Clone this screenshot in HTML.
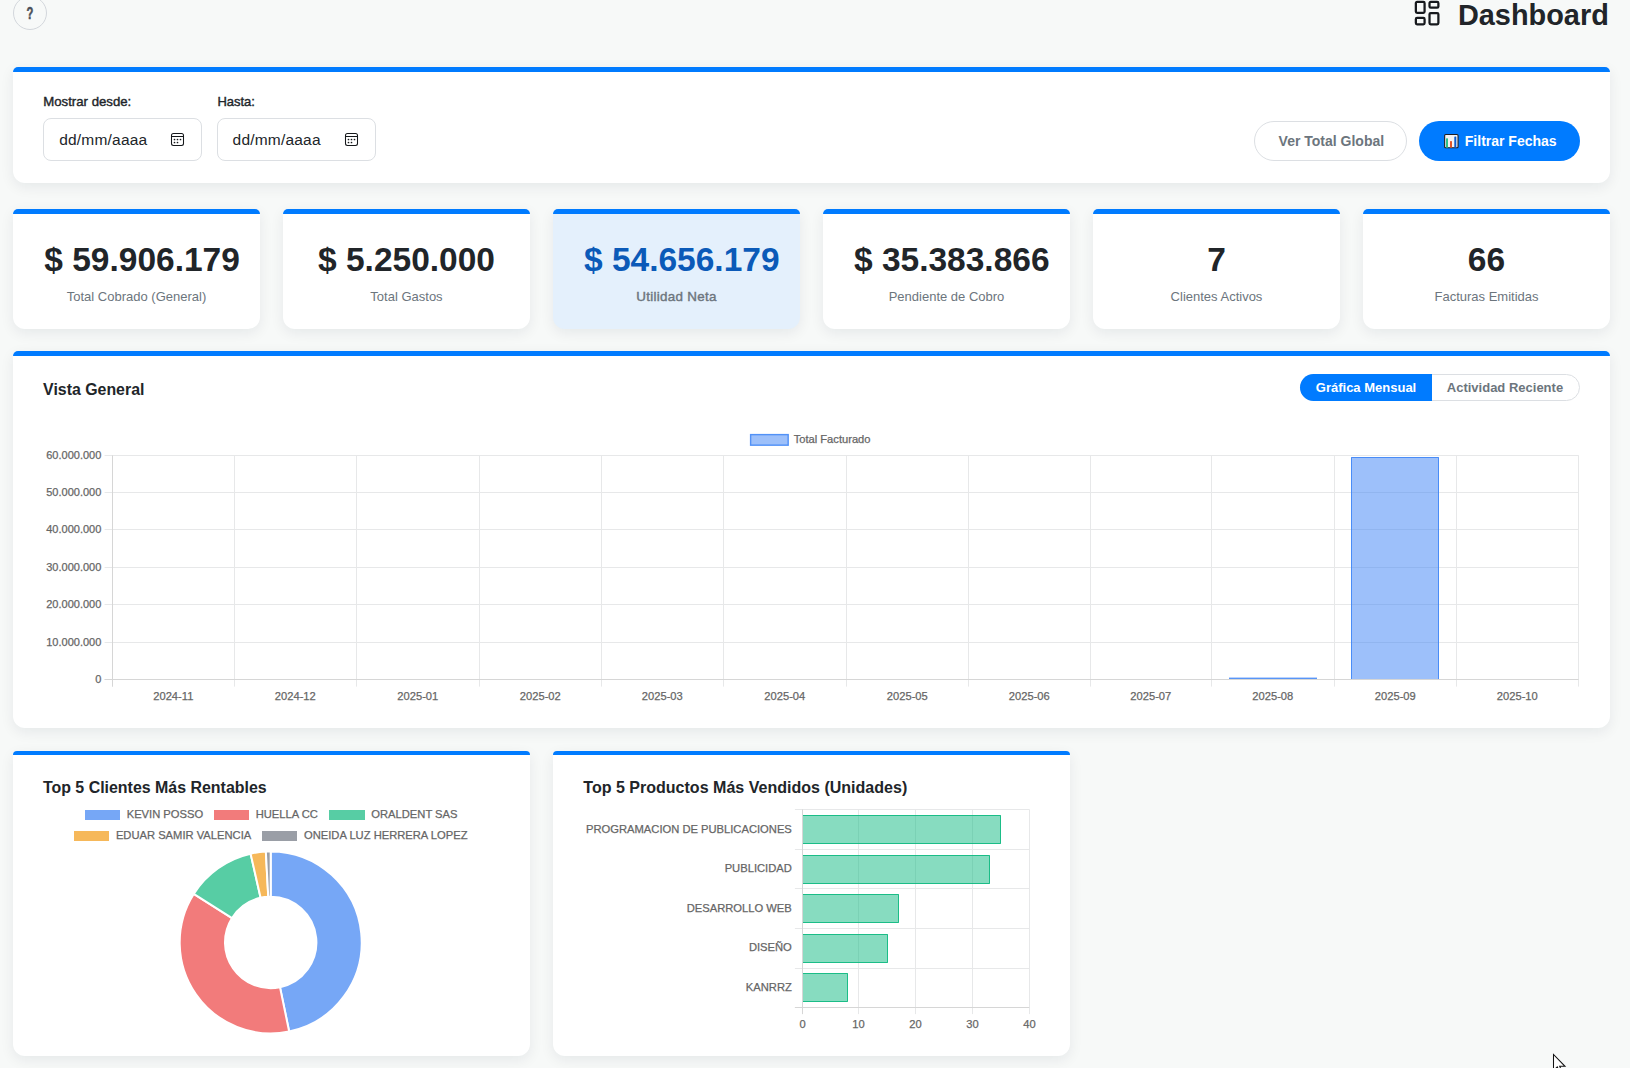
<!DOCTYPE html>
<html><head><meta charset="utf-8"><title>Dashboard</title>
<style>
html,body{margin:0;padding:0;}
body{width:1630px;height:1068px;overflow:hidden;position:relative;background:#f7f9f8;font-family:"Liberation Sans",sans-serif;}
.t{position:absolute;white-space:nowrap;}
</style></head><body>
<div style="position:absolute;left:13.00px;top:-4.00px;width:34.00px;height:34.00px;border:1px solid #d3d7dc;border-radius:50%;box-sizing:border-box;"></div>
<div class="t" style="left:-470.00px;width:1000px;text-align:center;top:4.19px;font-size:15.6px;line-height:20px;font-weight:700;color:#4a5058;transform:scaleX(0.72);-webkit-text-stroke:0.5px #4a5058;">?</div>
<svg style="position:absolute;left:1408px;top:0px" width="36" height="30" viewBox="1408 0 36 30">
<g fill="none" stroke="#16191d" stroke-width="2.25">
<rect x="1415.86" y="1.96" width="8.72" height="10.82" rx="1.2"/>
<rect x="1429.52" y="1.96" width="8.86" height="5.77" rx="1.2"/>
<rect x="1415.86" y="17.97" width="8.72" height="6.31" rx="1.2"/>
<rect x="1429.52" y="13.02" width="8.86" height="11.26" rx="1.2"/>
</g></svg>
<div class="t" style="left:1457.90px;top:-3.92px;font-size:28.9px;line-height:38px;font-weight:700;color:#212529;">Dashboard</div>
<div style="position:absolute;left:13.00px;top:67.00px;width:1597.00px;height:116.00px;background:#fff;border-radius:5px 5px 12px 12px;box-shadow:0 4px 14px rgba(20,30,55,0.075);overflow:hidden;"></div>
<div style="position:absolute;left:13.00px;top:67.00px;width:1597.00px;height:5.00px;background:#007bff;border-radius:5px 5px 0 0;"></div>
<div class="t" style="left:43.30px;top:93.02px;font-size:13.2px;line-height:17px;font-weight:400;color:#212529;-webkit-text-stroke:0.4px #212529;">Mostrar desde:</div>
<div class="t" style="left:217.40px;top:93.09px;font-size:13.0px;line-height:17px;font-weight:400;color:#212529;-webkit-text-stroke:0.4px #212529;">Hasta:</div>
<div style="position:absolute;left:43.30px;top:118.00px;width:158.50px;height:42.50px;border:1px solid #dcdfe3;border-radius:8px;box-sizing:border-box;background:#fff;"></div>
<div class="t" style="left:59.20px;top:129.73px;font-size:15.5px;line-height:20px;font-weight:400;color:#212529;letter-spacing:0.2px;">dd/mm/aaaa</div>
<svg style="position:absolute;left:166px;top:128px" width="24" height="22" viewBox="166 128 24 22">
<rect x="171.5" y="133.5" width="12" height="12" rx="2" fill="none" stroke="#15181b" stroke-width="1.05"/>
<line x1="171.5" y1="136.5" x2="183.5" y2="136.5" stroke="#15181b" stroke-width="1.05"/>
<g fill="#15181b"><circle cx="174.5" cy="139.5" r="0.85"/><circle cx="177.5" cy="139.5" r="0.85"/><circle cx="180.5" cy="139.5" r="0.85"/><circle cx="174.5" cy="142.5" r="0.85"/><circle cx="177.5" cy="142.5" r="0.85"/></g></svg>
<div style="position:absolute;left:217.20px;top:118.00px;width:158.50px;height:42.50px;border:1px solid #dcdfe3;border-radius:8px;box-sizing:border-box;background:#fff;"></div>
<div class="t" style="left:232.60px;top:129.73px;font-size:15.5px;line-height:20px;font-weight:400;color:#212529;letter-spacing:0.2px;">dd/mm/aaaa</div>
<svg style="position:absolute;left:340px;top:128px" width="24" height="22" viewBox="166 128 24 22">
<rect x="171.5" y="133.5" width="12" height="12" rx="2" fill="none" stroke="#15181b" stroke-width="1.05"/>
<line x1="171.5" y1="136.5" x2="183.5" y2="136.5" stroke="#15181b" stroke-width="1.05"/>
<g fill="#15181b"><circle cx="174.5" cy="139.5" r="0.85"/><circle cx="177.5" cy="139.5" r="0.85"/><circle cx="180.5" cy="139.5" r="0.85"/><circle cx="174.5" cy="142.5" r="0.85"/><circle cx="177.5" cy="142.5" r="0.85"/></g></svg>
<div style="position:absolute;left:1254.40px;top:121.00px;width:152.30px;height:39.80px;border:1px solid #dcdfe3;border-radius:20px;box-sizing:border-box;background:#fff;"></div>
<div class="t" style="left:1278.60px;top:131.95px;font-size:14px;line-height:18px;font-weight:700;color:#6c757d;">Ver Total Global</div>
<div style="position:absolute;left:1419.00px;top:121.00px;width:161.00px;height:40.00px;background:#007bff;border-radius:20px;"></div>
<svg style="position:absolute;left:1436px;top:126px" width="30" height="30" viewBox="1436 126 30 30">
<rect x="1444.65" y="134.55" width="13.4" height="13.2" rx="1" fill="#f3f3f3" stroke="#1d1d22" stroke-width="1.1"/>
<rect x="1446" y="138.3" width="2" height="9.4" rx="0.6" fill="#2fc28a"/>
<rect x="1450" y="141" width="2" height="6.7" rx="0.6" fill="#e0552a"/>
<rect x="1454.3" y="136.5" width="2" height="11.2" rx="0.6" fill="#0a5cd0"/>
</svg>
<div class="t" style="left:1464.80px;top:131.95px;font-size:14px;line-height:18px;font-weight:700;color:#fff;">Filtrar Fechas</div>
<div style="position:absolute;left:13.00px;top:209.00px;width:247.00px;height:120.00px;background:#fff;border-radius:5px 5px 12px 12px;box-shadow:0 4px 14px rgba(20,30,55,0.075);overflow:hidden;"></div>
<div style="position:absolute;left:13.00px;top:209.00px;width:247.00px;height:5.00px;background:#007bff;border-radius:5px 5px 0 0;"></div>
<div class="t" style="left:-357.95px;width:1000px;text-align:center;top:238.09px;font-size:33.5px;line-height:44px;font-weight:700;color:#212529;">$ 59.906.179</div>
<div class="t" style="left:-363.50px;width:1000px;text-align:center;top:287.99px;font-size:13px;line-height:17px;font-weight:400;color:#6c757d;">Total Cobrado (General)</div>
<div style="position:absolute;left:283.00px;top:209.00px;width:247.00px;height:120.00px;background:#fff;border-radius:5px 5px 12px 12px;box-shadow:0 4px 14px rgba(20,30,55,0.075);overflow:hidden;"></div>
<div style="position:absolute;left:283.00px;top:209.00px;width:247.00px;height:5.00px;background:#007bff;border-radius:5px 5px 0 0;"></div>
<div class="t" style="left:-93.50px;width:1000px;text-align:center;top:238.09px;font-size:33.5px;line-height:44px;font-weight:700;color:#212529;">$ 5.250.000</div>
<div class="t" style="left:-93.50px;width:1000px;text-align:center;top:287.99px;font-size:13px;line-height:17px;font-weight:400;color:#6c757d;">Total Gastos</div>
<div style="position:absolute;left:553.00px;top:209.00px;width:247.00px;height:120.00px;background:#e4f0fc;border-radius:5px 5px 12px 12px;box-shadow:0 4px 14px rgba(20,30,55,0.075);overflow:hidden;"></div>
<div style="position:absolute;left:553.00px;top:209.00px;width:247.00px;height:5.00px;background:#007bff;border-radius:5px 5px 0 0;"></div>
<div class="t" style="left:181.75px;width:1000px;text-align:center;top:238.09px;font-size:33.5px;line-height:44px;font-weight:700;color:#0b5ab8;">$ 54.656.179</div>
<div class="t" style="left:176.50px;width:1000px;text-align:center;top:287.85px;font-size:13.4px;line-height:17px;font-weight:400;color:#6c757d;-webkit-text-stroke:0.4px #6c757d;letter-spacing:0.3px;">Utilidad Neta</div>
<div style="position:absolute;left:823.00px;top:209.00px;width:247.00px;height:120.00px;background:#fff;border-radius:5px 5px 12px 12px;box-shadow:0 4px 14px rgba(20,30,55,0.075);overflow:hidden;"></div>
<div style="position:absolute;left:823.00px;top:209.00px;width:247.00px;height:5.00px;background:#007bff;border-radius:5px 5px 0 0;"></div>
<div class="t" style="left:451.75px;width:1000px;text-align:center;top:238.09px;font-size:33.5px;line-height:44px;font-weight:700;color:#212529;">$ 35.383.866</div>
<div class="t" style="left:446.50px;width:1000px;text-align:center;top:287.99px;font-size:13px;line-height:17px;font-weight:400;color:#6c757d;">Pendiente de Cobro</div>
<div style="position:absolute;left:1093.00px;top:209.00px;width:247.00px;height:120.00px;background:#fff;border-radius:5px 5px 12px 12px;box-shadow:0 4px 14px rgba(20,30,55,0.075);overflow:hidden;"></div>
<div style="position:absolute;left:1093.00px;top:209.00px;width:247.00px;height:5.00px;background:#007bff;border-radius:5px 5px 0 0;"></div>
<div class="t" style="left:716.50px;width:1000px;text-align:center;top:238.09px;font-size:33.5px;line-height:44px;font-weight:700;color:#212529;">7</div>
<div class="t" style="left:716.50px;width:1000px;text-align:center;top:287.99px;font-size:13px;line-height:17px;font-weight:400;color:#6c757d;">Clientes Activos</div>
<div style="position:absolute;left:1363.00px;top:209.00px;width:247.00px;height:120.00px;background:#fff;border-radius:5px 5px 12px 12px;box-shadow:0 4px 14px rgba(20,30,55,0.075);overflow:hidden;"></div>
<div style="position:absolute;left:1363.00px;top:209.00px;width:247.00px;height:5.00px;background:#007bff;border-radius:5px 5px 0 0;"></div>
<div class="t" style="left:986.50px;width:1000px;text-align:center;top:238.09px;font-size:33.5px;line-height:44px;font-weight:700;color:#212529;">66</div>
<div class="t" style="left:986.50px;width:1000px;text-align:center;top:287.99px;font-size:13px;line-height:17px;font-weight:400;color:#6c757d;">Facturas Emitidas</div>
<div style="position:absolute;left:13.00px;top:351.00px;width:1597.00px;height:376.60px;background:#fff;border-radius:5px 5px 12px 12px;box-shadow:0 4px 14px rgba(20,30,55,0.075);overflow:hidden;"></div>
<div style="position:absolute;left:13.00px;top:351.00px;width:1597.00px;height:5.00px;background:#007bff;border-radius:5px 5px 0 0;"></div>
<div class="t" style="left:43.10px;top:378.79px;font-size:15.9px;line-height:21px;font-weight:700;color:#212529;">Vista General</div>
<div style="position:absolute;left:1300.00px;top:374.00px;width:280.00px;height:27.30px;border:1px solid #dcdfe3;border-radius:14px;box-sizing:border-box;background:#fff;"></div>
<div style="position:absolute;left:1300.00px;top:374.00px;width:131.70px;height:27.30px;background:#007bff;border-radius:14px 0 0 14px;"></div>
<div class="t" style="left:1315.80px;top:379.19px;font-size:13px;line-height:17px;font-weight:700;color:#fff;">Gráfica Mensual</div>
<div class="t" style="left:1446.80px;top:379.19px;font-size:13px;line-height:17px;font-weight:700;color:#6c757d;">Actividad Reciente</div>
<svg style="position:absolute;left:0;top:0" width="1630" height="1068"><line x1="112.50" y1="455.4" x2="112.50" y2="686.6" stroke="#e7e8e9" stroke-width="1"/><line x1="234.50" y1="455.4" x2="234.50" y2="686.6" stroke="#e7e8e9" stroke-width="1"/><line x1="356.50" y1="455.4" x2="356.50" y2="686.6" stroke="#e7e8e9" stroke-width="1"/><line x1="479.50" y1="455.4" x2="479.50" y2="686.6" stroke="#e7e8e9" stroke-width="1"/><line x1="601.50" y1="455.4" x2="601.50" y2="686.6" stroke="#e7e8e9" stroke-width="1"/><line x1="723.50" y1="455.4" x2="723.50" y2="686.6" stroke="#e7e8e9" stroke-width="1"/><line x1="846.50" y1="455.4" x2="846.50" y2="686.6" stroke="#e7e8e9" stroke-width="1"/><line x1="968.50" y1="455.4" x2="968.50" y2="686.6" stroke="#e7e8e9" stroke-width="1"/><line x1="1090.50" y1="455.4" x2="1090.50" y2="686.6" stroke="#e7e8e9" stroke-width="1"/><line x1="1211.50" y1="455.4" x2="1211.50" y2="686.6" stroke="#e7e8e9" stroke-width="1"/><line x1="1334.50" y1="455.4" x2="1334.50" y2="686.6" stroke="#e7e8e9" stroke-width="1"/><line x1="1456.50" y1="455.4" x2="1456.50" y2="686.6" stroke="#e7e8e9" stroke-width="1"/><line x1="1578.50" y1="455.4" x2="1578.50" y2="686.6" stroke="#e7e8e9" stroke-width="1"/><line x1="104.6" y1="455.50" x2="1578.6" y2="455.50" stroke="#e7e8e9" stroke-width="1"/><line x1="104.6" y1="492.50" x2="1578.6" y2="492.50" stroke="#e7e8e9" stroke-width="1"/><line x1="104.6" y1="529.50" x2="1578.6" y2="529.50" stroke="#e7e8e9" stroke-width="1"/><line x1="104.6" y1="567.50" x2="1578.6" y2="567.50" stroke="#e7e8e9" stroke-width="1"/><line x1="104.6" y1="604.50" x2="1578.6" y2="604.50" stroke="#e7e8e9" stroke-width="1"/><line x1="104.6" y1="642.50" x2="1578.6" y2="642.50" stroke="#e7e8e9" stroke-width="1"/><line x1="104.6" y1="679.50" x2="1578.6" y2="679.50" stroke="#e7e8e9" stroke-width="1"/><line x1="112.5" y1="455.4" x2="112.5" y2="686.6" stroke="#d6d6d6" stroke-width="1"/><line x1="104.6" y1="679.5" x2="1578.6" y2="679.5" stroke="#d6d6d6" stroke-width="1"/><rect x="1229" y="677.6" width="88" height="1.4" fill="rgba(59,130,246,0.85)"/><rect x="1351" y="457" width="88" height="222" fill="rgba(59,130,246,0.5)"/><path d="M1351.5,679 V457.5 H1438.5 V679" fill="none" stroke="rgba(59,130,246,0.85)" stroke-width="1"/><rect x="750.6" y="434.6" width="37.6" height="10.6" fill="rgba(59,130,246,0.5)" stroke="rgba(59,130,246,0.85)" stroke-width="1.4"/></svg>
<div class="t" style="left:793.70px;top:431.93px;font-size:11.15px;line-height:14px;font-weight:400;color:#666;-webkit-text-stroke:0.25px #666;">Total Facturado</div>
<div class="t" style="left:-898.70px;width:1000px;text-align:right;top:447.59px;font-size:11px;line-height:14px;font-weight:400;color:#666;-webkit-text-stroke:0.25px #666;">60.000.000</div>
<div class="t" style="left:-898.70px;width:1000px;text-align:right;top:484.59px;font-size:11px;line-height:14px;font-weight:400;color:#666;-webkit-text-stroke:0.25px #666;">50.000.000</div>
<div class="t" style="left:-898.70px;width:1000px;text-align:right;top:521.59px;font-size:11px;line-height:14px;font-weight:400;color:#666;-webkit-text-stroke:0.25px #666;">40.000.000</div>
<div class="t" style="left:-898.70px;width:1000px;text-align:right;top:559.59px;font-size:11px;line-height:14px;font-weight:400;color:#666;-webkit-text-stroke:0.25px #666;">30.000.000</div>
<div class="t" style="left:-898.70px;width:1000px;text-align:right;top:596.59px;font-size:11px;line-height:14px;font-weight:400;color:#666;-webkit-text-stroke:0.25px #666;">20.000.000</div>
<div class="t" style="left:-898.70px;width:1000px;text-align:right;top:634.59px;font-size:11px;line-height:14px;font-weight:400;color:#666;-webkit-text-stroke:0.25px #666;">10.000.000</div>
<div class="t" style="left:-898.70px;width:1000px;text-align:right;top:671.59px;font-size:11px;line-height:14px;font-weight:400;color:#666;-webkit-text-stroke:0.25px #666;">0</div>
<div class="t" style="left:-326.70px;width:1000px;text-align:center;top:688.93px;font-size:11.15px;line-height:14px;font-weight:400;color:#666;-webkit-text-stroke:0.25px #666;">2024-11</div>
<div class="t" style="left:-204.70px;width:1000px;text-align:center;top:688.93px;font-size:11.15px;line-height:14px;font-weight:400;color:#666;-webkit-text-stroke:0.25px #666;">2024-12</div>
<div class="t" style="left:-82.20px;width:1000px;text-align:center;top:688.93px;font-size:11.15px;line-height:14px;font-weight:400;color:#666;-webkit-text-stroke:0.25px #666;">2025-01</div>
<div class="t" style="left:40.30px;width:1000px;text-align:center;top:688.93px;font-size:11.15px;line-height:14px;font-weight:400;color:#666;-webkit-text-stroke:0.25px #666;">2025-02</div>
<div class="t" style="left:162.30px;width:1000px;text-align:center;top:688.93px;font-size:11.15px;line-height:14px;font-weight:400;color:#666;-webkit-text-stroke:0.25px #666;">2025-03</div>
<div class="t" style="left:284.80px;width:1000px;text-align:center;top:688.93px;font-size:11.15px;line-height:14px;font-weight:400;color:#666;-webkit-text-stroke:0.25px #666;">2025-04</div>
<div class="t" style="left:407.30px;width:1000px;text-align:center;top:688.93px;font-size:11.15px;line-height:14px;font-weight:400;color:#666;-webkit-text-stroke:0.25px #666;">2025-05</div>
<div class="t" style="left:529.30px;width:1000px;text-align:center;top:688.93px;font-size:11.15px;line-height:14px;font-weight:400;color:#666;-webkit-text-stroke:0.25px #666;">2025-06</div>
<div class="t" style="left:650.80px;width:1000px;text-align:center;top:688.93px;font-size:11.15px;line-height:14px;font-weight:400;color:#666;-webkit-text-stroke:0.25px #666;">2025-07</div>
<div class="t" style="left:772.80px;width:1000px;text-align:center;top:688.93px;font-size:11.15px;line-height:14px;font-weight:400;color:#666;-webkit-text-stroke:0.25px #666;">2025-08</div>
<div class="t" style="left:895.30px;width:1000px;text-align:center;top:688.93px;font-size:11.15px;line-height:14px;font-weight:400;color:#666;-webkit-text-stroke:0.25px #666;">2025-09</div>
<div class="t" style="left:1017.30px;width:1000px;text-align:center;top:688.93px;font-size:11.15px;line-height:14px;font-weight:400;color:#666;-webkit-text-stroke:0.25px #666;">2025-10</div>
<div style="position:absolute;left:13.00px;top:751.00px;width:517.00px;height:305.00px;background:#fff;border-radius:5px 5px 12px 12px;box-shadow:0 4px 14px rgba(20,30,55,0.075);overflow:hidden;"></div>
<div style="position:absolute;left:13.00px;top:751.00px;width:517.00px;height:4.00px;background:#007bff;border-radius:5px 5px 0 0;"></div>
<div class="t" style="left:42.90px;top:776.97px;font-size:15.95px;line-height:21px;font-weight:700;color:#212529;">Top 5 Clientes Más Rentables</div>
<div style="position:absolute;left:84.50px;top:810.10px;width:35.60px;height:9.50px;background:#76a7f6;"></div>
<div class="t" style="left:126.70px;top:806.92px;font-size:11.2px;line-height:15px;font-weight:400;color:#666;-webkit-text-stroke:0.25px #666;">KEVIN POSSO</div>
<div style="position:absolute;left:213.50px;top:810.10px;width:35.60px;height:9.50px;background:#f27b7b;"></div>
<div class="t" style="left:255.70px;top:806.92px;font-size:11.2px;line-height:15px;font-weight:400;color:#666;-webkit-text-stroke:0.25px #666;">HUELLA CC</div>
<div style="position:absolute;left:329.00px;top:810.10px;width:35.60px;height:9.50px;background:#57cda4;"></div>
<div class="t" style="left:371.30px;top:806.92px;font-size:11.2px;line-height:15px;font-weight:400;color:#666;-webkit-text-stroke:0.25px #666;">ORALDENT SAS</div>
<div style="position:absolute;left:73.70px;top:831.20px;width:35.60px;height:9.50px;background:#f6b85a;"></div>
<div class="t" style="left:115.90px;top:828.02px;font-size:11.2px;line-height:15px;font-weight:400;color:#666;-webkit-text-stroke:0.25px #666;">EDUAR SAMIR VALENCIA</div>
<div style="position:absolute;left:261.80px;top:831.20px;width:35.60px;height:9.50px;background:#9a9ea6;"></div>
<div class="t" style="left:304.00px;top:828.02px;font-size:11.2px;line-height:15px;font-weight:400;color:#666;-webkit-text-stroke:0.25px #666;">ONEIDA LUZ HERRERA LOPEZ</div>
<svg style="position:absolute;left:0;top:0" width="1630" height="1068"><path d="M270.70,851.40 A91,91 0 0 1 289.15,1031.51 L279.97,987.15 A45.7,45.7 0 0 0 270.70,896.70 Z" fill="#76a7f6" stroke="#fff" stroke-width="2" stroke-linejoin="round"/><path d="M289.15,1031.51 A91,91 0 0 1 193.71,893.88 L232.04,918.03 A45.7,45.7 0 0 0 279.97,987.15 Z" fill="#f27b7b" stroke="#fff" stroke-width="2" stroke-linejoin="round"/><path d="M193.71,893.88 A91,91 0 0 1 250.57,853.65 L260.59,897.83 A45.7,45.7 0 0 0 232.04,918.03 Z" fill="#57cda4" stroke="#fff" stroke-width="2" stroke-linejoin="round"/><path d="M250.57,853.65 A91,91 0 0 1 265.84,851.53 L268.26,896.77 A45.7,45.7 0 0 0 260.59,897.83 Z" fill="#f6b85a" stroke="#fff" stroke-width="2" stroke-linejoin="round"/><path d="M265.84,851.53 A91,91 0 0 1 270.70,851.40 L270.70,896.70 A45.7,45.7 0 0 0 268.26,896.77 Z" fill="#9a9ea6" stroke="#fff" stroke-width="2" stroke-linejoin="round"/></svg>
<div style="position:absolute;left:553.00px;top:751.00px;width:517.00px;height:305.00px;background:#fff;border-radius:5px 5px 12px 12px;box-shadow:0 4px 14px rgba(20,30,55,0.075);overflow:hidden;"></div>
<div style="position:absolute;left:553.00px;top:751.00px;width:517.00px;height:4.00px;background:#007bff;border-radius:5px 5px 0 0;"></div>
<div class="t" style="left:583.30px;top:776.94px;font-size:16.05px;line-height:21px;font-weight:700;color:#212529;">Top 5 Productos Más Vendidos (Unidades)</div>
<svg style="position:absolute;left:0;top:0" width="1630" height="1068"><line x1="802.50" y1="809.4" x2="802.50" y2="1014.1" stroke="#e7e8e9" stroke-width="1"/><line x1="858.50" y1="809.4" x2="858.50" y2="1014.1" stroke="#e7e8e9" stroke-width="1"/><line x1="915.50" y1="809.4" x2="915.50" y2="1014.1" stroke="#e7e8e9" stroke-width="1"/><line x1="972.50" y1="809.4" x2="972.50" y2="1014.1" stroke="#e7e8e9" stroke-width="1"/><line x1="1029.50" y1="809.4" x2="1029.50" y2="1014.1" stroke="#e7e8e9" stroke-width="1"/><line x1="794.9" y1="809.50" x2="1029.3" y2="809.50" stroke="#e7e8e9" stroke-width="1"/><line x1="794.9" y1="849.50" x2="1029.3" y2="849.50" stroke="#e7e8e9" stroke-width="1"/><line x1="794.9" y1="888.50" x2="1029.3" y2="888.50" stroke="#e7e8e9" stroke-width="1"/><line x1="794.9" y1="928.50" x2="1029.3" y2="928.50" stroke="#e7e8e9" stroke-width="1"/><line x1="794.9" y1="968.50" x2="1029.3" y2="968.50" stroke="#e7e8e9" stroke-width="1"/><line x1="794.9" y1="1007.50" x2="1029.3" y2="1007.50" stroke="#e7e8e9" stroke-width="1"/><line x1="802.5" y1="809.4" x2="802.5" y2="1014.1" stroke="#d6d6d6" stroke-width="1"/><line x1="794.9" y1="1007.5" x2="1029.3" y2="1007.5" stroke="#d6d6d6" stroke-width="1"/><rect x="803" y="815.0" width="198.00" height="29" fill="rgba(16,185,129,0.5)"/><path d="M803,815.5 H1000.5 V843.5 H803" fill="none" stroke="rgba(16,185,129,0.9)" stroke-width="1"/><rect x="803" y="855.0" width="187.00" height="29" fill="rgba(16,185,129,0.5)"/><path d="M803,855.5 H989.5 V883.5 H803" fill="none" stroke="rgba(16,185,129,0.9)" stroke-width="1"/><rect x="803" y="894.0" width="96.00" height="29" fill="rgba(16,185,129,0.5)"/><path d="M803,894.5 H898.5 V922.5 H803" fill="none" stroke="rgba(16,185,129,0.9)" stroke-width="1"/><rect x="803" y="934.0" width="85.00" height="29" fill="rgba(16,185,129,0.5)"/><path d="M803,934.5 H887.5 V962.5 H803" fill="none" stroke="rgba(16,185,129,0.9)" stroke-width="1"/><rect x="803" y="973.0" width="45.00" height="29" fill="rgba(16,185,129,0.5)"/><path d="M803,973.5 H847.5 V1001.5 H803" fill="none" stroke="rgba(16,185,129,0.9)" stroke-width="1"/></svg>
<div class="t" style="left:-208.20px;width:1000px;text-align:right;top:821.59px;font-size:11.2px;line-height:15px;font-weight:400;color:#666;-webkit-text-stroke:0.25px #666;">PROGRAMACION DE PUBLICACIONES</div>
<div class="t" style="left:-208.20px;width:1000px;text-align:right;top:861.13px;font-size:11.2px;line-height:15px;font-weight:400;color:#666;-webkit-text-stroke:0.25px #666;">PUBLICIDAD</div>
<div class="t" style="left:-208.20px;width:1000px;text-align:right;top:900.67px;font-size:11.2px;line-height:15px;font-weight:400;color:#666;-webkit-text-stroke:0.25px #666;">DESARROLLO WEB</div>
<div class="t" style="left:-208.20px;width:1000px;text-align:right;top:940.21px;font-size:11.2px;line-height:15px;font-weight:400;color:#666;-webkit-text-stroke:0.25px #666;">DISEÑO</div>
<div class="t" style="left:-208.20px;width:1000px;text-align:right;top:979.75px;font-size:11.2px;line-height:15px;font-weight:400;color:#666;-webkit-text-stroke:0.25px #666;">KANRRZ</div>
<div class="t" style="left:302.50px;width:1000px;text-align:center;top:1016.93px;font-size:11.15px;line-height:14px;font-weight:400;color:#666;-webkit-text-stroke:0.25px #666;">0</div>
<div class="t" style="left:358.50px;width:1000px;text-align:center;top:1016.93px;font-size:11.15px;line-height:14px;font-weight:400;color:#666;-webkit-text-stroke:0.25px #666;">10</div>
<div class="t" style="left:415.50px;width:1000px;text-align:center;top:1016.93px;font-size:11.15px;line-height:14px;font-weight:400;color:#666;-webkit-text-stroke:0.25px #666;">20</div>
<div class="t" style="left:472.50px;width:1000px;text-align:center;top:1016.93px;font-size:11.15px;line-height:14px;font-weight:400;color:#666;-webkit-text-stroke:0.25px #666;">30</div>
<div class="t" style="left:529.50px;width:1000px;text-align:center;top:1016.93px;font-size:11.15px;line-height:14px;font-weight:400;color:#666;-webkit-text-stroke:0.25px #666;">40</div>
<svg style="position:absolute;left:1540px;top:1040px" width="40" height="28" viewBox="1540 1040 40 28">
<path d="M1553.5,1054.5 V1070.5 L1557.3,1066.9 L1559.8,1072.5 L1562,1071.5 L1559.7,1066.3 L1565,1066.3 Z" fill="#fff" stroke="#111" stroke-width="1.05" stroke-linejoin="miter"/>
</svg>
</body></html>
